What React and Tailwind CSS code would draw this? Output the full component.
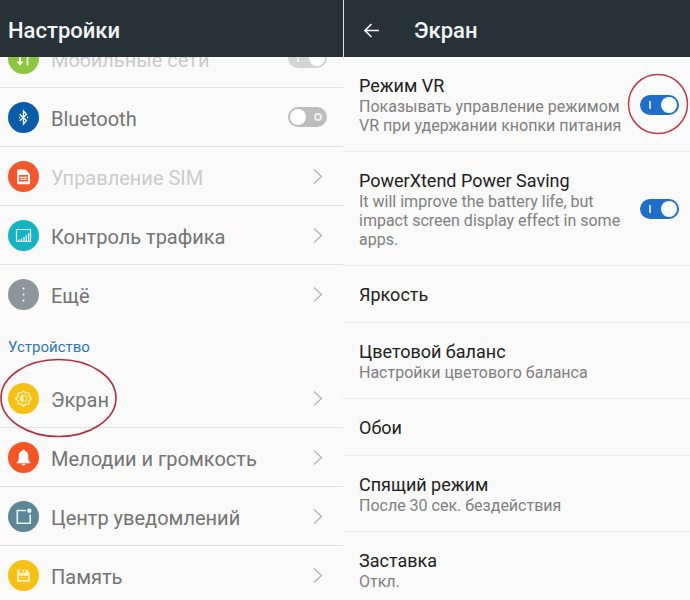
import { useState } from 'react';
import clsx from 'clsx';

function MobileIcon() {
  return (
    <svg viewBox="0 0 31 31" className="h-full w-full" fill="none" stroke="#fff" strokeWidth="1.6">
      <path d="M12 8v13M9.5 18.5l2.5 3 2.5-3" />
      <path d="M19.5 22.5V9.5M17 12.5l2.5-3 2.5 3" />
    </svg>
  );
}

function BluetoothIcon() {
  return (
    <svg viewBox="0 0 31 31" className="h-full w-full" fill="none" stroke="#fff" strokeWidth="1.3">
      <path d="m11.8 12.2 6.7 6.4-3 3.4V9l3 3.4-6.7 6.4" />
      <path d="M11 15.5h1.2M19 15.5h1.2" />
    </svg>
  );
}

function SimIcon() {
  return (
    <svg viewBox="0 0 31 31" className="h-full w-full" fill="none">
      <path d="M10 8.5h7.5l4.5 4.5v9.5a.8.8 0 0 1-.8.8H10a.8.8 0 0 1-.8-.8V9.3c0-.5.3-.8.8-.8Z" fill="#fff" />
      <path d="M11 14h9v6.5h-9z" fill="#f4582a" />
      <path d="M11.5 16.2h8M12.2 18.4h7M13.8 16v2.4M17.2 16v2.4" stroke="#fff" strokeWidth=".9" />
    </svg>
  );
}

function TrafficIcon() {
  return (
    <svg viewBox="0 0 31 31" className="h-full w-full" fill="none" stroke="#e6fbfd">
      <path d="M8.5 9.5h14v12h-14z" strokeWidth="1.2" />
      <path d="M11 21v-1.5M13.5 21v-2.5M16 21v-4M18.3 21v-6M20.6 21v-8" strokeWidth="1.3" />
    </svg>
  );
}

function MoreIcon() {
  return (
    <svg viewBox="0 0 31 31" className="h-full w-full" fill="#fff">
      <circle cx="15.5" cy="9.5" r="1" />
      <circle cx="15.5" cy="15.5" r="1" />
      <circle cx="15.5" cy="21.5" r="1" />
    </svg>
  );
}

function DisplayIcon() {
  return (
    <svg viewBox="0 0 31 31" className="h-full w-full" fill="none" stroke="#fff3b8">
      <path
        d="M13.2 10.1 15.5 7.8l2.3 2.3H21v3.2l2.3 2.2-2.3 2.3V21h-3.2l-2.3 2.3-2.3-2.3H10v-3.2l-2.3-2.3 2.3-2.2v-3.2Z"
        strokeWidth="1.3"
      />
      <circle cx="15.5" cy="15.5" r="3.3" strokeWidth="1" />
      <path d="M15.5 12.2a3.3 3.3 0 0 0 0 6.6Z" fill="#fff3b8" stroke="none" />
    </svg>
  );
}

function BellIcon() {
  return (
    <svg viewBox="0 0 31 31" className="h-full w-full" fill="#fff">
      <path d="M15.5 7.8c.9 0 1.5.5 1.6 1.3 2.1.7 3.2 2.4 3.2 4.7v4.4l2 2.2v.8H8.7v-.8l2-2.2v-4.4c0-2.3 1.1-4 3.2-4.7.1-.8.7-1.3 1.6-1.3Z" />
      <path d="M13.5 21.8h4a2 1.6 0 0 1-4 0Z" />
    </svg>
  );
}

function NotifyIcon() {
  return (
    <svg viewBox="0 0 31 31" className="h-full w-full" fill="none">
      <path d="M18 9.5H9.3v12.7h12.9V13.5" stroke="#e4f3f8" strokeWidth="1.6" />
      <circle cx="21.3" cy="9.8" r="2.2" fill="#e4f3f8" />
    </svg>
  );
}

function StorageIcon() {
  return (
    <svg viewBox="0 0 31 31" className="h-full w-full" fill="none">
      <path d="M9.2 9.5h9.3l3.3 3.3v9H9.2z" fill="#fff5c4" />
      <path d="M11.5 9.5h6v3.3h-6zM11 15.8h9V20h-9z" fill="#f8c012" />
      <path d="M14.5 9.5h1.6v2.4h-1.6z" fill="#fff5c4" />
      <path d="M12 17.9h7" stroke="#fde58a" strokeWidth=".8" />
    </svg>
  );
}

const NETWORK_ITEMS = [
  { id: 'mobile', label: 'Мобильные сети', icon: MobileIcon, color: 'bg-[#8cc63f]', toggle: true, disabled: true },
  { id: 'bluetooth', label: 'Bluetooth', icon: BluetoothIcon, color: 'bg-[#0a5ca8]', toggle: true },
  { id: 'sim', label: 'Управление SIM', icon: SimIcon, color: 'bg-[#f4582a]', disabled: true },
  { id: 'traffic', label: 'Контроль трафика', icon: TrafficIcon, color: 'bg-[#12b4c6]' },
  { id: 'more', label: 'Ещё', icon: MoreIcon, color: 'bg-[#8d9699]' },
];

const DEVICE_ITEMS = [
  { id: 'display', label: 'Экран', icon: DisplayIcon, color: 'bg-[#f8c012]', marked: true },
  { id: 'sound', label: 'Мелодии и громкость', icon: BellIcon, color: 'bg-[#f95423]' },
  { id: 'notify', label: 'Центр уведомлений', icon: NotifyIcon, color: 'bg-[#5b8796]' },
  { id: 'storage', label: 'Память', icon: StorageIcon, color: 'bg-[#f8c012]' },
];

const DISPLAY_ITEMS = [
  { id: 'vr', title: 'Режим VR', text: 'Показывать управление режимом VR при удержании кнопки питания', toggle: true, marked: true },
  {
    id: 'power',
    title: 'PowerXtend Power Saving',
    text: 'It will improve the battery life, but impact screen display effect in some apps.',
    toggle: true,
  },
  { id: 'brightness', title: 'Яркость' },
  { id: 'balance', title: 'Цветовой баланс', text: 'Настройки цветового баланса' },
  { id: 'wallpaper', title: 'Обои' },
  { id: 'sleep', title: 'Спящий режим', text: 'После 30 сек. бездействия' },
  { id: 'saver', title: 'Заставка', text: 'Откл.' },
];

function Switch({ id, checked, onChange, disabled }) {
  return (
    <span
      className={clsx(
        'relative flex h-5 w-[39px] shrink-0 items-center rounded-full p-[2px]',
        checked && !disabled ? 'bg-[#1d6fc9]' : 'bg-[#bdbdbd]',
        checked ? 'justify-end' : 'justify-start',
        disabled && 'opacity-60'
      )}
    >
      <input
        id={id}
        type="checkbox"
        role="switch"
        checked={checked}
        disabled={disabled}
        onChange={(e) => onChange(e.target.checked)}
        className="absolute inset-0 m-0 cursor-pointer appearance-none rounded-full"
      />
      {checked ? (
        <span className="mr-2.5 h-2 w-[2px] bg-white/75" />
      ) : (
        <span className="order-last ml-2 h-2 w-2 rounded-full border-2 border-[#eeeeee]" />
      )}
      <span className="h-4 w-4 rounded-full bg-white" />
    </span>
  );
}

function Chevron() {
  return (
    <svg viewBox="0 0 10 16" className="mr-1 h-4 w-[10px] shrink-0" fill="none" stroke="#b4b4b4" strokeWidth="1.3">
      <path d="m1 1.5 7.5 7L1 15.5" />
    </svg>
  );
}

function SettingRow({ item, checked, onToggle }) {
  const Icon = item.icon;
  const rowClass =
    'flex h-[59px] items-center border-b border-[#e2e2e2] pl-2 pr-4 group-last:border-transparent';
  const content = (
    <>
      <span className={clsx('h-[31px] w-[31px] shrink-0 rounded-full', item.color)}>
        <Icon />
      </span>
      <span className={clsx('ml-3 flex-1 pt-1 text-xl', item.disabled ? 'text-[#cbcbcb]' : 'text-[#747474]')}>
        {item.label}
      </span>
    </>
  );

  return (
    <li className="group relative">
      {item.toggle ? (
        <label htmlFor={item.id} className={rowClass}>
          {content}
          <Switch id={item.id} checked={checked} disabled={item.disabled} onChange={onToggle} />
        </label>
      ) : (
        <a href={`#${item.id}`} className={rowClass}>
          {content}
          <Chevron />
        </a>
      )}
      {item.marked && (
        <svg
          viewBox="0 0 118 80"
          className="pointer-events-none absolute -top-[11px] left-0 h-20 w-[118px]"
          fill="none"
          stroke="#b5303f"
          strokeWidth="1.6"
        >
          <ellipse cx="58.5" cy="40" rx="57.5" ry="38.5" />
        </svg>
      )}
    </li>
  );
}

function DisplayRow({ item, checked, onToggle }) {
  const rowClass = 'flex items-center border-b border-[#ececec] pb-4 pl-4 pr-[11px] pt-[17px]';
  const content = (
    <span className="flex-1">
      <span className="block text-lg leading-[23px] text-[#212121]">{item.title}</span>
      {item.text && <span className="block text-base leading-[19px] text-[#808080]">{item.text}</span>}
    </span>
  );

  if (!item.toggle) {
    return (
      <li>
        <a href={`#${item.id}`} className={rowClass}>
          {content}
        </a>
      </li>
    );
  }

  return (
    <li>
      <label htmlFor={item.id} className={rowClass}>
        {content}
        <span className="relative ml-3 shrink-0">
          <Switch id={item.id} checked={checked} onChange={onToggle} />
          {item.marked && (
            <svg
              viewBox="0 0 62 62"
              className="pointer-events-none absolute -left-[13px] -top-[22px] h-[62px] w-[62px]"
              fill="none"
              stroke="#c03a48"
              strokeWidth="1.5"
            >
              <circle cx="31" cy="31" r="29.5" />
            </svg>
          )}
        </span>
      </label>
    </li>
  );
}

export default function App() {
  const [enabled, setEnabled] = useState({ mobile: true, bluetooth: false, vr: true, power: true });
  const toggle = (id) => (value) => setEnabled((s) => ({ ...s, [id]: value }));

  return (
    <div className="grid h-screen grid-cols-[343fr_347fr] overflow-hidden bg-[#fafafa] font-['Roboto',sans-serif]">
      <section className="min-w-0">
        <header className="relative z-10 flex h-[57px] items-center bg-[#263238] pl-2 pt-1">
          <h1 className="text-[22px] font-medium text-[#f4f6f7]">Настройки</h1>
        </header>
        {/* the list is scrolled half a row under the header */}
        <ul className="-mt-7">
          {NETWORK_ITEMS.map((item) => (
            <SettingRow key={item.id} item={item} checked={enabled[item.id]} onToggle={toggle(item.id)} />
          ))}
        </ul>
        <h2 className="h-[45px] pl-2 pt-3 text-[15px] text-[#2878b8]">Устройство</h2>
        <ul>
          {DEVICE_ITEMS.map((item) => (
            <SettingRow key={item.id} item={item} />
          ))}
        </ul>
      </section>

      <section className="min-w-0">
        <header className="flex h-[57px] items-center border-l border-[#dfe5e7] bg-[#263238] pl-5 pt-1">
          <button type="button" aria-label="Назад" className="h-4 w-4">
            <svg viewBox="0 0 16 16" fill="none" stroke="#f4f6f7" strokeWidth="1.6">
              <path d="M15 7.5H1.2M7.5 1 1 7.5 7.5 14" />
            </svg>
          </button>
          <h1 className="ml-[34px] text-[22px] font-medium text-[#f4f6f7]">Экран</h1>
        </header>
        <ul>
          {DISPLAY_ITEMS.map((item) => (
            <DisplayRow key={item.id} item={item} checked={enabled[item.id]} onToggle={toggle(item.id)} />
          ))}
        </ul>
      </section>
    </div>
  );
}
